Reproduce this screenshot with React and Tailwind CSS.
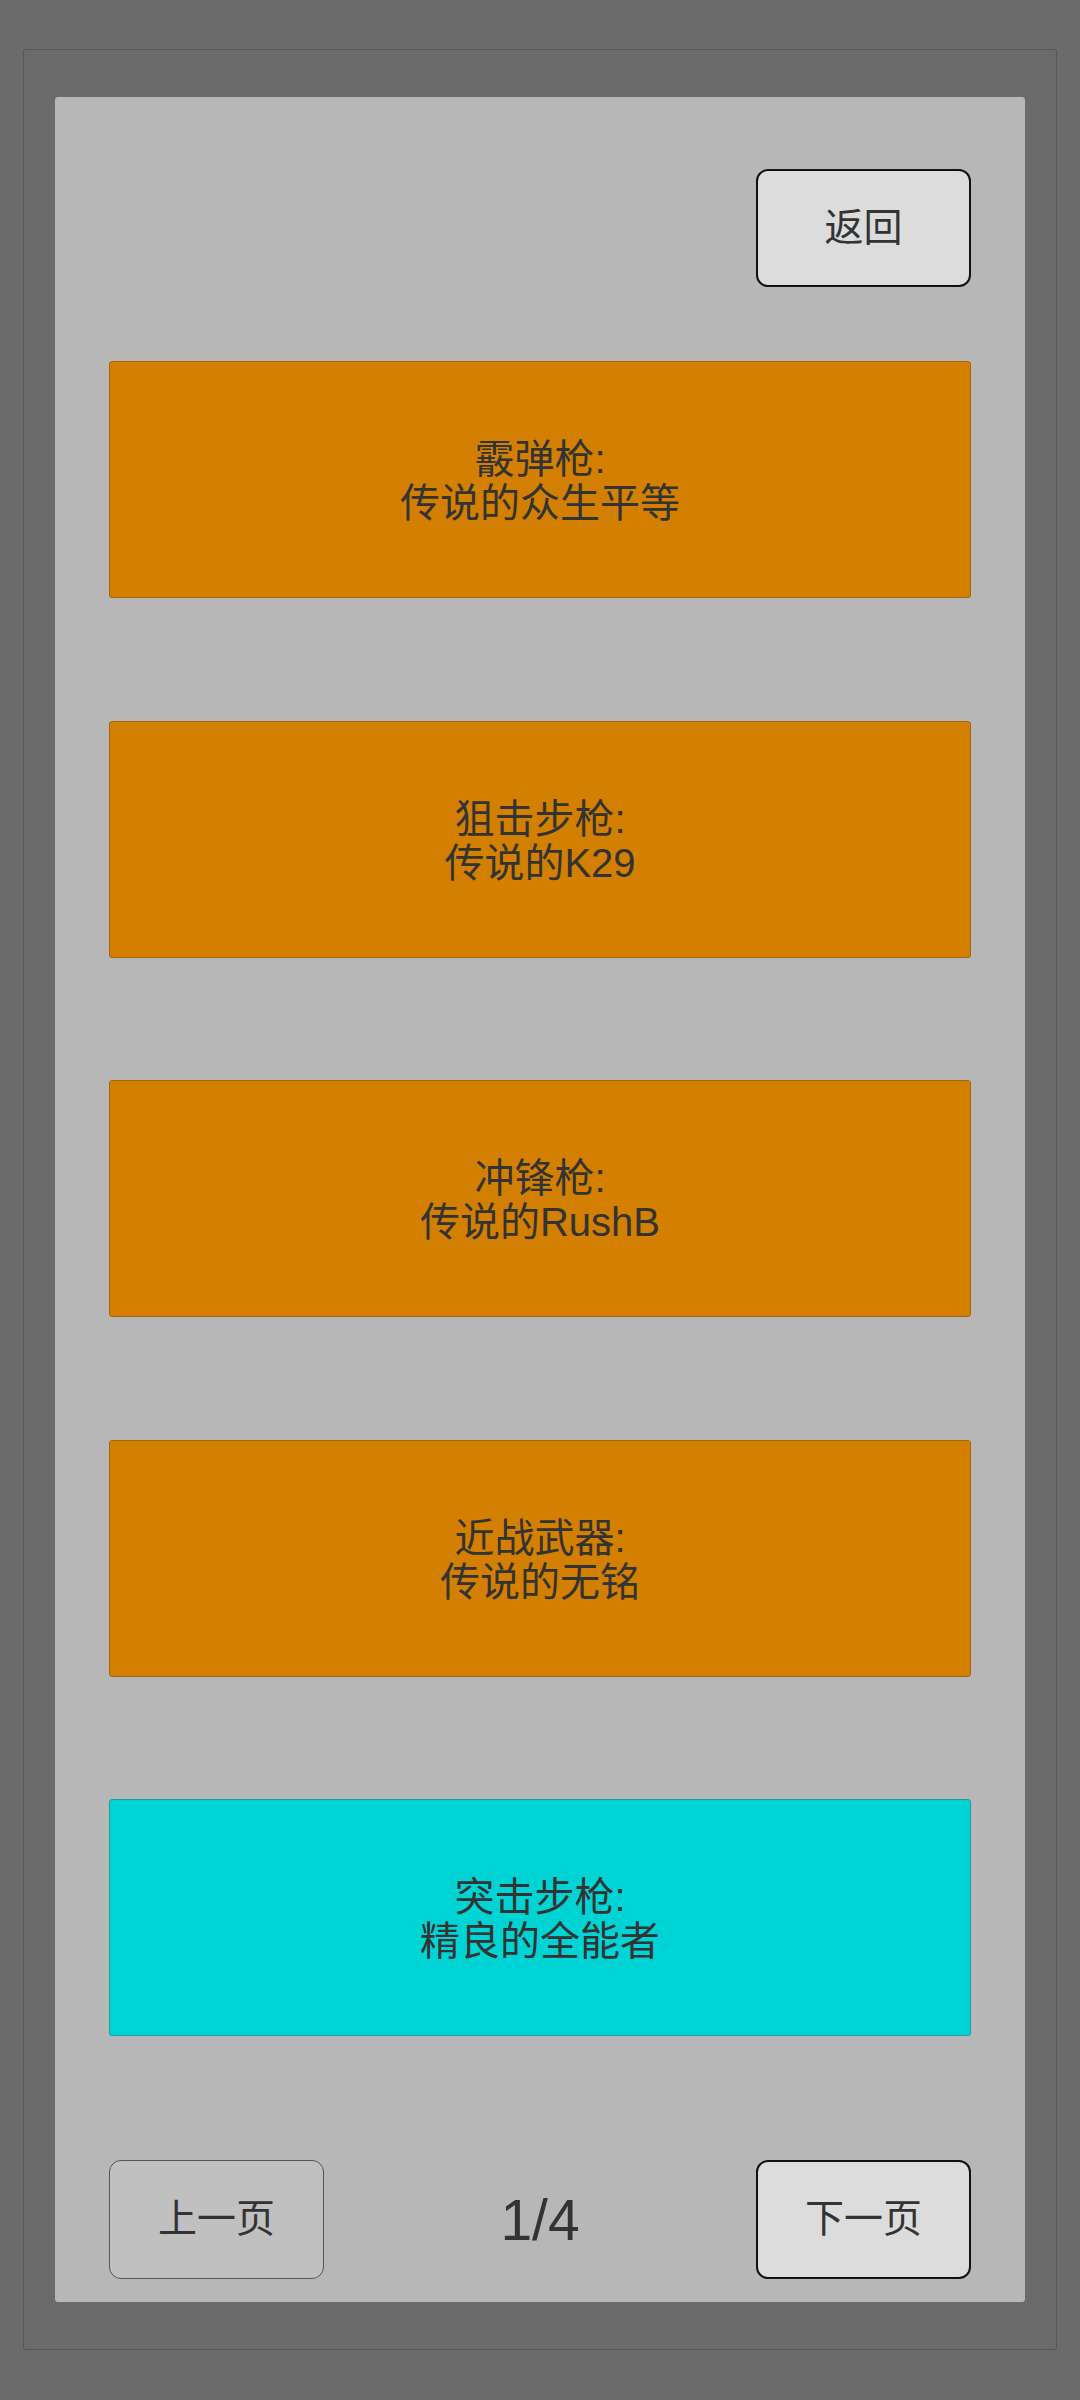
import React from "react";

const weapons = [
  { type: "霰弹枪:", name: "传说的众生平等", tone: "legend" },
  { type: "狙击步枪:", name: "传说的K29", tone: "legend" },
  { type: "冲锋枪:", name: "传说的RushB", tone: "legend" },
  { type: "近战武器:", name: "传说的无铭", tone: "legend" },
  { type: "突击步枪:", name: "精良的全能者", tone: "fine" },
];

function WeaponCard({ type, name, tone }) {
  const color =
    tone === "fine"
      ? "bg-[#00d3d3] border-[#1f9c9c]"
      : "bg-[#d38000] border-[#a5660c]";

  return (
    <div
      className={`h-[237px] rounded-[3px] border flex flex-col items-center justify-center pt-[3px] text-[40px] leading-[44px] text-[#333333] ${color}`}
    >
      <span>{type}</span>
      <span>{name}</span>
    </div>
  );
}

export default function App() {
  return (
    <div
      className="min-h-[2400px] bg-[#6b6b6b] pt-[49px] px-[23px]"
      style={{ fontFamily: '"Liberation Sans", "Noto Sans CJK SC", sans-serif' }}
    >
      <div className="border border-[#575757] rounded-[2px] pt-[47px] pb-[47px] px-[31px]">
        <div className="bg-[#b7b7b7] rounded-[3px] pt-[72px] pb-[23px] px-[54px] flex flex-col">
          <button className="self-end w-[215px] h-[118px] rounded-[12px] border-2 border-[#111111] bg-[#dcdcdc] text-[39px] text-[#333333]">
            返回
          </button>

          <div className="mt-[74px] flex flex-col gap-[122.5px]">
            {weapons.map((w) => (
              <WeaponCard key={w.type} {...w} />
            ))}
          </div>

          <div className="mt-[124px] flex items-center justify-between">
            <button className="w-[215px] h-[119px] rounded-[12px] border-[1.5px] border-[#555555] bg-[#c0c0c0] text-[39px] text-[#333333]">
              上一页
            </button>
            <span className="pt-[2px] text-[57px] text-[#333333]">1/4</span>
            <button className="w-[215px] h-[119px] rounded-[12px] border-2 border-[#111111] bg-[#dcdcdc] text-[39px] text-[#333333]">
              下一页
            </button>
          </div>
        </div>
      </div>
    </div>
  );
}
